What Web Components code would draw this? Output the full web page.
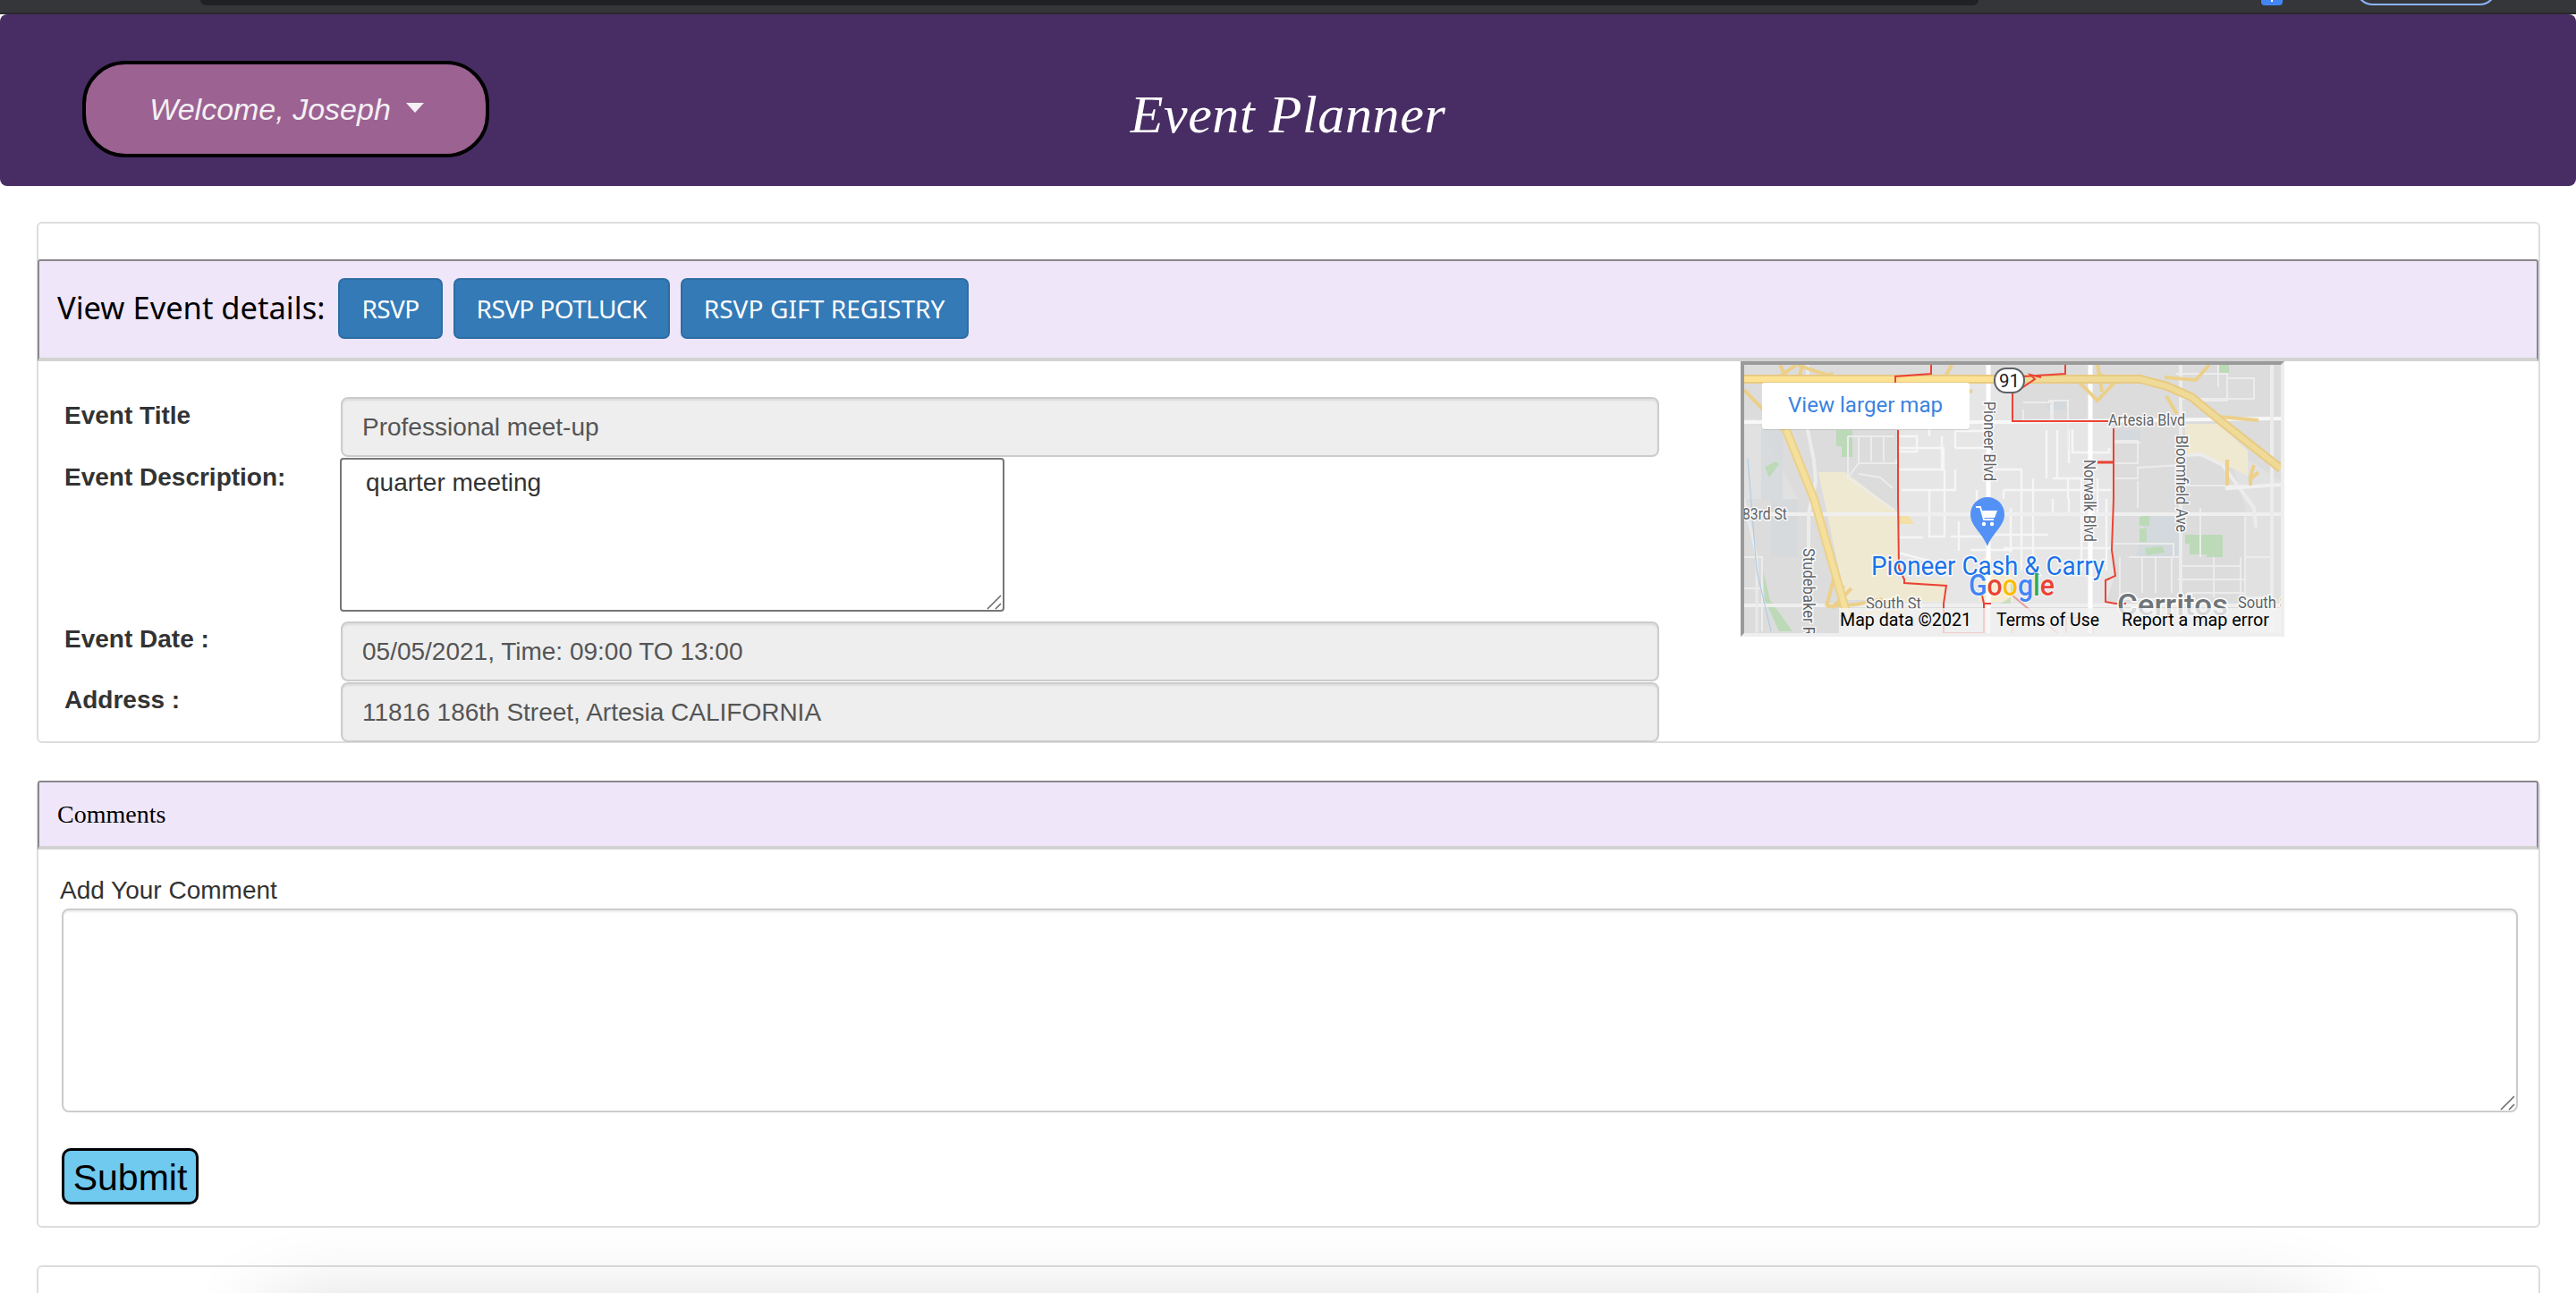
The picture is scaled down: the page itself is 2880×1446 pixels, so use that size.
<!DOCTYPE html>
<html>
<head>
<meta charset="utf-8">
<title>Event Planner</title>
<style>
  html, body { margin: 0; height: 1446px; overflow: hidden; background: #fff; }
  body { font-family: "Liberation Sans", Arial, sans-serif; color: #333; }
</style>
</head>
<body>
<browser-strip></browser-strip>
<site-header name="Joseph" title="Event Planner"></site-header>
<main-column>
  <panel-card id="details">
    <panel-bar>
      <span>View Event details:</span>
      <bar-button>RSVP</bar-button>
      <bar-button>RSVP POTLUCK</bar-button>
      <bar-button style="letter-spacing:.1px">RSVP GIFT REGISTRY</bar-button>
    </panel-bar>
    <event-details></event-details>
  </panel-card>
  <panel-card id="comments">
    <comment-form></comment-form>
  </panel-card>
  <panel-card id="next"></panel-card>
</main-column>
<drop-shade></drop-shade>

<script>
class BrowserStrip extends HTMLElement {
  constructor () {
    super();
    this.attachShadow({mode: 'open'}).innerHTML = `
      <style>
      :host { display: flex; align-items: flex-start; height: 14px; overflow: hidden; background: #35363a; border-bottom: 2px solid #2a2a2c; }
      .url { width: 1988px; height: 6px; margin-left: 224px; background: #202124; border-radius: 0 0 10px 10px; }
      .ext { width: 24px; height: 6px; margin-left: 316px; background: #4285f4; border-radius: 0 0 4px 4px; position: relative; }
      .ext::after { content: ""; position: absolute; left: 11px; top: 0; width: 2px; height: 2px; background: #fff; }
      .pill { box-sizing: border-box; flex: none; width: 159px; height: 40px; margin: -34px 0 0 81px; border: 2px solid #8ab4f8; border-radius: 20px; }
      </style>
      <div class="url"></div><div class="ext"></div><div class="pill"></div>`;
  }
}

class SiteHeader extends HTMLElement {
  constructor () {
    super();
    this.attachShadow({mode: 'open'}).innerHTML = `
      <style>
      :host { display: grid; grid-template-columns: 1fr auto 1fr; align-items: start; height: 192px; background: #482d64; border-radius: 8px; box-sizing: border-box; padding-left: 92px; }
      .welcome { display: flex; align-items: center; justify-content: center; box-sizing: border-box; width: 455px; height: 108px; margin-top: 52px; padding-left: 2px; background: #9c6292; border: 4px solid #000; border-radius: 48px; color: #f4f0f4; font: italic 34px "Liberation Sans", sans-serif; }
      .caret { width: 0; height: 0; margin-left: 17px; margin-top: -3px; border-top: 11px solid #f4f0f4; border-left: 10px solid transparent; border-right: 10px solid transparent; }
      h1 { margin: 78px 0 0 -92px; color: #fff; font: italic 400 60px "Liberation Serif", serif; letter-spacing: .6px; }
      </style>
      <div class="welcome"><span></span><i class="caret"></i></div>
      <h1></h1>`;
    this.shadowRoot.querySelector('span').textContent = 'Welcome, ' + this.getAttribute('name');
    this.shadowRoot.querySelector('h1').textContent = this.getAttribute('title');
  }
}

class MainColumn extends HTMLElement {
  constructor () {
    super();
    this.attachShadow({mode: 'open'}).innerHTML = `
      <style>:host { display: block; padding: 40px 40px 0 41px; }</style>
      <slot></slot>`;
  }
}

class PanelCard extends HTMLElement {
  constructor () {
    super();
    this.attachShadow({mode: 'open'}).innerHTML = `
      <style>
      :host { display: block; box-sizing: border-box; margin-bottom: 42px; border: 2px solid #ddd; border-radius: 6px; background: #fff; }
      :host(#details) { height: 583px; padding-top: 40px; }
      :host(#comments) { height: 500px; }
      :host(#next) { height: 31px; margin-bottom: 0; border-bottom: 0; border-radius: 6px 6px 0 0; }
      </style>
      <slot></slot>`;
  }
}

class PanelBar extends HTMLElement {
  constructor () {
    super();
    this.attachShadow({mode: 'open'}).innerHTML = `
      <style>
      :host { display: flex; align-items: center; gap: 12px; box-sizing: border-box; height: 114px; margin-left: -1px; padding: 0 0 2px 20px; background: #efe6f9; border: 2px solid #8a878c; border-bottom: 4px solid #d2d2d2; border-radius: 3px 3px 0 0; color: #000; font: 34.500px/1 "Noto Sans", Tahoma, sans-serif; }
      ::slotted(span) { margin: -2px 3px 0 0; }
      </style>
      <slot></slot>`;
  }
}

class BarButton extends HTMLElement {
  constructor () {
    super();
    this.attachShadow({mode: 'open'}).innerHTML = `
      <style>
      :host { display: flex; align-items: center; box-sizing: border-box; height: 68px; padding: 0 24px; background: #337ab7; border: 2px solid #2e6da4; border-radius: 7px; color: #fff; font: 28px/1 "Noto Sans", Tahoma, sans-serif; letter-spacing: -.6px; }
      </style>
      <slot></slot>`;
  }
}

class ReadonlyField extends HTMLElement {
  constructor () {
    super();
    this.attachShadow({mode: 'open'}).innerHTML = `
      <style>
      :host { display: flex; align-items: center; box-sizing: border-box; height: 67px; width: 1474px; padding: 0 22px; background: #eee; border: 2px solid #ccc; border-radius: 8px; box-shadow: inset 0 2px 2px rgba(0,0,0,.075); color: #555; font-size: 28px; }
      </style>
      <slot></slot>`;
  }
}

// textarea with the two stroke resize grip of the reference
class GripArea extends HTMLElement {
  constructor () {
    super();
    this.attachShadow({mode: 'open'}).innerHTML = `
      <style>
      :host { display: block; position: relative; box-sizing: border-box; }
      textarea { display: block; box-sizing: border-box; width: 100%; height: 100%; margin: 0; padding: var(--area-pad, 0); resize: none; outline: none; background: #fff; color: #333; border: 2px solid var(--area-line, #ccc); border-radius: var(--area-radius, 8px); box-shadow: var(--area-shadow, none); font: 28px/32px "Liberation Sans", sans-serif; }
      svg { position: absolute; right: 0; bottom: 0; }
      </style>
      <textarea readonly></textarea>
      <svg width="22" height="22" viewBox="0 0 22 22"><path d="M3 19L18 4M12 19L18 13" fill="none" stroke="#666" stroke-width="1.500"/></svg>`;
    this.shadowRoot.querySelector('textarea').textContent = this.getAttribute('text') || '';
  }
}

class EventDetails extends HTMLElement {
  constructor () {
    super();
    this.attachShadow({mode: 'open'}).innerHTML = `
      <style>
      :host { display: flex; align-items: flex-start; padding-left: 29px; }
      .form { display: grid; grid-template-columns: 309px 1474px; padding-top: 40px; }
      label { color: #333; font: 700 28px/32px "Liberation Sans", sans-serif; }
      grip-area { width: 743px; height: 172px; margin: 1px 0 11px -1px; --area-pad: 10px 27px 0 27px; --area-line: #767676; --area-radius: 4px; }
      map-embed { margin-left: 91px; }
      </style>
      <div class="form">
        <label style="padding-top:5px">Event Title</label><readonly-field>Professional meet-up</readonly-field>
        <label style="padding-top:7px">Event Description:</label><grip-area text="quarter meeting"></grip-area>
        <label style="padding-top:4px">Event Date :</label><readonly-field style="margin-bottom:1px">05/05/2021, Time: 09:00 TO 13:00</readonly-field>
        <label style="padding-top:4px">Address :</label><readonly-field>11816 186th Street, Artesia CALIFORNIA</readonly-field>
      </div>
      <map-embed></map-embed>`;
  }
}

class MapEmbed extends HTMLElement {
  constructor () {
    super();
    // roads and areas are in the 600x300 space of the embedded map
    this.attachShadow({mode: 'open'}).innerHTML = `
      <style>
      :host { display: block; flex: none; width: 600px; height: 300px; border: 4px solid; border-color: #9a9a9a #eee #eee #9a9a9a; }
      svg { display: block; }
      text { font-family: Roboto, sans-serif; }
      .lbl { fill: #5f6368; font-size: 18px; paint-order: stroke; stroke: #fff; stroke-width: 3px; stroke-opacity: .85; }
      .att { fill: #000; font-size: 20px; }
      </style>
      <svg width="600" height="300" viewBox="0 0 600 300">
        <rect width="600" height="300" fill="#dcdcdc"/>
        <path fill="#e6e6e6" d="M172 20H300V63H413V240L404 267H172z"/>
        <path fill="#e6e6e6" d="M0 60H14L60 150H0z M540 90L600 130V300H560V160z" opacity=".5"/>
        <!-- tan lots, water, parks -->
        <path fill="#f0e9d2" d="M83 120H113L172 165V240H226V265H172V263H113z"/>
        <path fill="#f0e9d2" d="M493 66H530L563 96V124L520 103L493 98z"/>
        <path fill="#fbeec8" d="M262 265H300V230H276V215H268z" opacity=".7"/>
        <path fill="#f6dfa5" d="M172 165L185 170L190 178H172z"/>
        <path fill="#d3d9dd" d="M19 73H43V151H60V215H30V151H19z" opacity=".7"/>
        <path fill="#d3d9dd" d="M450 167H487V215H438zM413 73H443V87H413zM338 40H360V50H338z"/>
        <path fill="#bcdab8" d="M103 73H121V103H109V91H103zM23 114L36 108L39 111L28 126zM493 190H535V215H517V212H498V200H493zM442 170L453 168V180H442zM442 183H450V198H442zM448 205L468 203L470 210L450 213zM530 0H542V9H530zM21 230L29 263L54 298H39L23 263z"/>
        <path fill="#c8dfc0" d="M285 268L304 256L298 240V268z"/>
        <!-- small streets, white inside the boundary and fainter outside -->
        <g fill="none" stroke="#f6f6f6" stroke-width="2.400">
          <path d="M172 97H193V80H172M172 117H223V93H172 M207 63V80M221 80V117 M176 140H236V117 M207 140V192H224V117 M236 93H272 M236 93V74H270 M224 150V192 M172 193H200 M172 210L232 226M231 192H272"/>
          <path d="M280 117H310V195M290 140H410M290 140V150M310 140V230 M323 127V230M338 73V127M350 73V127M363 73V110M345 127H362V150 M367 72V98H408V93 M377 127V230 M380 127H345M290 205H410M253 207H300M298 160V210 M280 190H340M240 175V208"/>
          <path d="M260 140V165M345 150V165M363 150V165 M395 127V165M405 150V230"/>
        </g>
        <g fill="none" stroke="#ececec" stroke-width="2">
          <path d="M128 80V110M142 80V108M156 80V108M116 80H168M116 80V126L128 110H170V106 M116 126L150 150L168 162M128 122L152 126L166 138"/>
          <path d="M413 110H440V85H413 M413 87H443 M413 127H440V115L490 112 M440 130V160 M413 200H480V215M430 215H490M445 215V255M460 215V255M478 215V255M485 240H560V215M495 255H560 M420 215V262M420 262H490M490 225H555 M525 215V260M555 215V262"/>
          <path d="M490 135H590 M510 160V215M560 170V260H590M560 215H590"/>
          <path d="M483 10H540V40H500M540 15H570V38H490M530 0V25M340 40H362V95M343 44V62 M312 42H345V62H312V50 M0 250H20V298M0 215H20V265"/>
        </g>
        <!-- main roads -->
        <g fill="none" stroke="#f5f5f5" stroke-linecap="square">
          <path stroke-width="4" stroke="#f8f8f8" d="M0 64H296L600 60"/>
          <path stroke-width="4" stroke="#efefef" d="M0 167H600M0 269H600"/>
          <path stroke-width="5" stroke="#fff" d="M273 0V300M387 0V300"/>
          <path stroke-width="4" stroke="#ececec" d="M488 0V300M590 0V300M71 0V73L78 107L80 130L72 167V270"/>
          <path stroke-width="3" stroke="#e9e9e9" d="M0 150L14 215L14 298"/>
          <path stroke-width="4" stroke="#ececec" d="M495 101L510 100L535 112L570 160L572 180"/>
          <path stroke-width="4" stroke="#f0f0f0" d="M540 138L600 134"/>
        </g>
        <path d="M4 105L14 230L30 298" fill="none" stroke="#a6cbe8" stroke-width="1"/>
        <!-- freeways -->
        <g fill="none" stroke="#ecd08a">
          <path stroke-width="4" d="M40 0L50 20M58 0L30 20M0 28L45 75M100 10L60 20L65 0M60 0Q110 20 140 16M232 0L220 22L255 30 M370 15L395 40L412 22L395 8M395 0L400 30M520 0L505 17L470 14M472 35L484 55M530 58L575 62"/>
          <path stroke-width="10" stroke="#e8ca82" d="M0 16H443L473 24L500 36L533 63L600 116"/>
          <path stroke-width="10" d="M47 73L78 150L118 290"/>
          <path stroke-width="4" d="M540 106V135M570 112L566 125V135M566 128L575 120 M92 270L100 240L112 250M92 270L125 268L155 262M98 272L120 250M130 278L180 275"/>
        </g>
        <g fill="none">
          <path stroke="#fde293" stroke-width="6" d="M0 16H296"/>
          <path stroke="#efdb97" stroke-width="6" d="M296 16H443L473 24L500 36L533 63L600 116"/>
          <path stroke="#f4e09c" stroke-width="6" d="M47 73L78 150L118 290"/>
        </g>
        <!-- city boundary -->
        <g fill="none" stroke="#ea4335" stroke-width="2">
          <path d="M209 0V10L169 13V20M172 73V150L173 227L179 240V244L226 247L223 267V300H268V267H276M268 267L266 258"/>
          <path d="M359 0V10L313 13M332 14L320 11L325 16L307 28L300 31V63H407M413 71V150L411 207L415 236L404 241V265L415 267H427"/>
          <path stroke-width="3" d="M395 109H413"/>
          <path d="M300 258L350 300M360 300V283H390V300M300 285V300" opacity=".45" stroke-width="2"/>
        </g>
        <!-- shield -->
        <rect x="280" y="4" width="33" height="27" rx="13" fill="#fff" stroke="#5f6368" stroke-width="2"/>
        <text x="296.500" y="25" text-anchor="middle" font-size="20" fill="#202124" textLength="23" lengthAdjust="spacingAndGlyphs">91</text>
        <!-- street names -->
        <text class="lbl" x="407" y="68" textLength="86" lengthAdjust="spacingAndGlyphs">Artesia Blvd</text>
        <text class="lbl" x="-2" y="173" textLength="50" lengthAdjust="spacingAndGlyphs">83rd St</text>
        <text class="lbl" x="136" y="273" textLength="62" lengthAdjust="spacingAndGlyphs">South St</text>
        <text class="lbl" x="552" y="272" textLength="62" lengthAdjust="spacingAndGlyphs">South St</text>
        <text class="lbl" transform="translate(268 41) rotate(90)" textLength="89" lengthAdjust="spacingAndGlyphs">Pioneer Blvd</text>
        <text class="lbl" transform="translate(380 106) rotate(90)" textLength="92" lengthAdjust="spacingAndGlyphs">Norwalk Blvd</text>
        <text class="lbl" transform="translate(483 79) rotate(90)" textLength="108" lengthAdjust="spacingAndGlyphs">Bloomfield Ave</text>
        <text class="lbl" transform="translate(66 205) rotate(90)" textLength="98" lengthAdjust="spacingAndGlyphs">Studebaker R</text>
        <text x="417" y="280" font-size="34" font-weight="500" fill="#70757a" textLength="124" lengthAdjust="spacingAndGlyphs" style="paint-order:stroke;stroke:#fff;stroke-width:3px">Cerritos</text>
        <!-- pin -->
        <path fill="#5491f5" d="M272 148a19 19 0 0 1 19 19c0 14-13 20-19 36c-6-16-19-22-19-36a19 19 0 0 1 19-19z"/>
        <path fill="none" stroke="#fff" stroke-width="1.800" d="M259 159h5l4 14h11"/>
        <path fill="#fff" d="M266 163h17l-3 8h-12z"/>
        <circle cx="268" cy="178" r="2.200" fill="#fff"/><circle cx="277" cy="178" r="2.200" fill="#fff"/>
        <!-- place name and logo -->
        <text x="142" y="235" font-size="30" fill="#1a73e8" textLength="261" lengthAdjust="spacingAndGlyphs" style="paint-order:stroke;stroke:#fff;stroke-width:3px;stroke-opacity:.85">Pioneer Cash &amp; Carry</text>
        <text x="251" y="258" font-size="33" font-weight="500" textLength="96" lengthAdjust="spacingAndGlyphs" style="paint-order:stroke;stroke:#fff;stroke-width:2px;stroke-opacity:.7"><tspan fill="#4285f4">G</tspan><tspan fill="#ea4335">o</tspan><tspan fill="#fbbc05">o</tspan><tspan fill="#4285f4">g</tspan><tspan fill="#34a853">l</tspan><tspan fill="#ea4335">e</tspan></text>
        <!-- attribution -->
        <rect x="106" y="272" width="494" height="28" fill="#f5f5f5" fill-opacity=".78"/>
        <text class="att" x="107" y="292" textLength="147" lengthAdjust="spacingAndGlyphs">Map data ©2021</text>
        <text class="att" x="282" y="292" textLength="115" lengthAdjust="spacingAndGlyphs">Terms of Use</text>
        <text class="att" x="422" y="292" textLength="165" lengthAdjust="spacingAndGlyphs">Report a map error</text>
        <!-- larger map link -->
        <rect x="20" y="21" width="232" height="52" rx="3" fill="#000" opacity=".12"/>
        <rect x="20" y="20" width="232" height="52" rx="3" fill="#fff"/>
        <text x="49" y="53" font-size="24" fill="#3a84df" textLength="173" lengthAdjust="spacingAndGlyphs">View larger map</text>
      </svg>`;
  }
}

class CommentForm extends HTMLElement {
  constructor () {
    super();
    this.attachShadow({mode: 'open'}).innerHTML = `
      <style>
      :host { display: block; }
      .bar { display: flex; align-items: center; box-sizing: border-box; height: 77px; margin: -2px 0 0 -1px; padding: 0 0 0 20px; background: #efe6f9; border: 2px solid #8a878c; border-bottom: 4px solid #d2d2d2; border-radius: 3px 3px 0 0; color: #000; font: 28px "Liberation Serif", serif; }
      .body { padding: 30px 25px 0 24px; }
      label { display: block; color: #333; font: 28px/32px "Liberation Sans", sans-serif; }
      grip-area { width: 2746px; height: 228px; margin: 4px 0 40px 2px; --area-shadow: inset 0 2px 2px rgba(0,0,0,.075); }
      button { display: block; box-sizing: border-box; width: 153px; height: 63px; margin: 0 0 0 2px; padding: 3px 0 0; background: #70c9ef; border: 3px solid #000; border-radius: 10px; color: #000; font: 41px "Liberation Sans", sans-serif; }
      </style>
      <div class="bar">Comments</div>
      <div class="body">
        <label>Add Your Comment</label>
        <grip-area></grip-area>
        <button>Submit</button>
      </div>`;
  }
}

class DropShade extends HTMLElement {
  constructor () {
    super();
    this.attachShadow({mode: 'open'}).innerHTML = `
      <style>
      :host { position: absolute; left: 0; top: 0; width: 2880px; height: 1446px; overflow: hidden; pointer-events: none; }
      div { position: absolute; left: 300px; top: 1470px; width: 2290px; height: 100px; box-shadow: 0 0 100px rgba(0,0,0,.2); }
      </style>
      <div></div>`;
  }
}

customElements.define('browser-strip', BrowserStrip);
customElements.define('site-header', SiteHeader);
customElements.define('main-column', MainColumn);
customElements.define('panel-card', PanelCard);
customElements.define('panel-bar', PanelBar);
customElements.define('bar-button', BarButton);
customElements.define('readonly-field', ReadonlyField);
customElements.define('grip-area', GripArea);
customElements.define('event-details', EventDetails);
customElements.define('map-embed', MapEmbed);
customElements.define('comment-form', CommentForm);
customElements.define('drop-shade', DropShade);
</script>
</body>
</html>
